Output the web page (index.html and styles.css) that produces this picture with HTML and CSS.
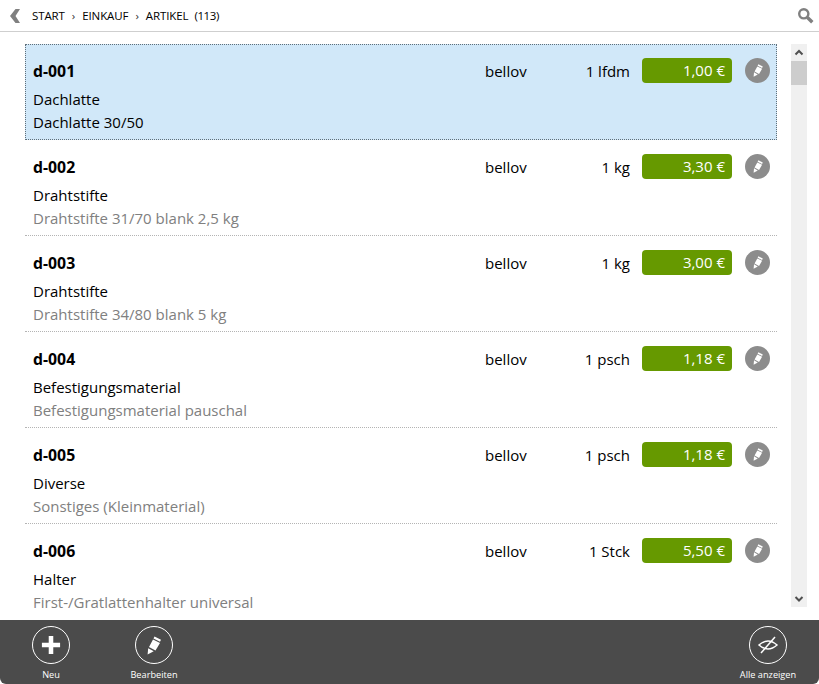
FILE: index.html
```html
<!doctype html>
<html>
    <head>
        <meta charset="utf-8">
        <title>Artikel</title>
        <link rel="stylesheet" href="styles.css">
    </head>
    <body>
    <svg class="defs" width="0" height="0">
        <symbol id="pen" viewBox="0 0 14 19">
            <path d="M7.5 0.5 L14 3.7 L13 5.7 L6.5 2.5 Z"/>
            <path d="M6 3.5 L13 7 L8.5 14.5 L2 11 Z"/>
            <path d="M1.2 12.2 L6.7 15.2 L0.6 18.6 Z"/>
        </symbol>
    </svg>

    <div class="app">
        <div class="topbar">
            <svg class="back" width="10" height="14" viewBox="0 0 10 14"><path d="M5.5 0 L10 0 L5.5 7 L10 14 L5.5 14 L0 7 Z"/></svg>
            <div class="crumbs">
                <span>START</span><span class="sep">›</span><span>EINKAUF</span><span class="sep">›</span><span>ARTIKEL</span><span class="count">(113)</span>
            </div>
            <svg class="search" width="17" height="17" viewBox="0 0 17 17"><circle cx="6.8" cy="6.8" r="4.6"/><path d="M10.5 10.5 L15.3 15.3"/></svg>
        </div>

        <div class="main">
            <div class="list">
                <div class="row selected">
                    <div class="row-top">
                        <div class="nr">d-001</div>
                        <div class="owner">bellov</div>
                        <div class="unit">1 lfdm</div>
                        <div class="price">1,00 €</div>
                        <div class="edit"><svg width="10" height="13"><use href="#pen"/></svg></div>
                    </div>
                    <div class="name">Dachlatte</div>
                    <div class="desc">Dachlatte 30/50</div>
                </div>
                <div class="row">
                    <div class="row-top">
                        <div class="nr">d-002</div>
                        <div class="owner">bellov</div>
                        <div class="unit">1 kg</div>
                        <div class="price">3,30 €</div>
                        <div class="edit"><svg width="10" height="13"><use href="#pen"/></svg></div>
                    </div>
                    <div class="name">Drahtstifte</div>
                    <div class="desc">Drahtstifte 31/70 blank 2,5 kg</div>
                </div>
                <div class="row">
                    <div class="row-top">
                        <div class="nr">d-003</div>
                        <div class="owner">bellov</div>
                        <div class="unit">1 kg</div>
                        <div class="price">3,00 €</div>
                        <div class="edit"><svg width="10" height="13"><use href="#pen"/></svg></div>
                    </div>
                    <div class="name">Drahtstifte</div>
                    <div class="desc">Drahtstifte 34/80 blank 5 kg</div>
                </div>
                <div class="row">
                    <div class="row-top">
                        <div class="nr">d-004</div>
                        <div class="owner">bellov</div>
                        <div class="unit">1 psch</div>
                        <div class="price">1,18 €</div>
                        <div class="edit"><svg width="10" height="13"><use href="#pen"/></svg></div>
                    </div>
                    <div class="name">Befestigungsmaterial</div>
                    <div class="desc">Befestigungsmaterial pauschal</div>
                </div>
                <div class="row">
                    <div class="row-top">
                        <div class="nr">d-005</div>
                        <div class="owner">bellov</div>
                        <div class="unit">1 psch</div>
                        <div class="price">1,18 €</div>
                        <div class="edit"><svg width="10" height="13"><use href="#pen"/></svg></div>
                    </div>
                    <div class="name">Diverse</div>
                    <div class="desc">Sonstiges (Kleinmaterial)</div>
                </div>
                <div class="row last">
                    <div class="row-top">
                        <div class="nr">d-006</div>
                        <div class="owner">bellov</div>
                        <div class="unit">1 Stck</div>
                        <div class="price">5,50 €</div>
                        <div class="edit"><svg width="10" height="13"><use href="#pen"/></svg></div>
                    </div>
                    <div class="name">Halter</div>
                    <div class="desc">First-/Gratlattenhalter universal</div>
                </div>
            </div>
            <div class="scrollbar">
                <svg width="16" height="17" viewBox="0 0 16 17"><path d="M4.5 10.5 L8 7 L11.5 10.5"/></svg>
                <div class="thumb"></div>
                <svg width="16" height="17" viewBox="0 0 16 17"><path d="M4.5 7 L8 10.5 L11.5 7"/></svg>
            </div>
        </div>

        <div class="footer">
            <div class="action action-new">
                <div class="ring"><svg width="20" height="20" viewBox="0 0 22 22"><path d="M8.5 1 H13.5 V8.5 H21 V13.5 H13.5 V21 H8.5 V13.5 H1 V8.5 H8.5 Z"/></svg></div>
                <div class="label">Neu</div>
            </div>
            <div class="action action-edit">
                <div class="ring"><svg width="14" height="19"><use href="#pen"/></svg></div>
                <div class="label">Bearbeiten</div>
            </div>
            <div class="action action-all">
                <div class="ring">
                    <svg class="eye" width="24" height="24" viewBox="0 0 24 24"><path d="M3 12 Q12 4 21 12 Q12 20 3 12 Z"/><path d="M5 20 L19 4"/></svg>
                </div>
                <div class="label">Alle anzeigen</div>
            </div>
        </div>
    </div>
    </body>
</html>
```

FILE: styles.css
```css
html, body {
    margin: 0;
    padding: 0;
    background: #fff;
}
body {
    font-family: "Open Sans", "Noto Sans", sans-serif;
    color: #000;
}
.defs {
    display: block;
    height: 0;
}
.app {
    width: 819px;
    height: 684px;
    display: flex;
    flex-direction: column;
    overflow: hidden;
}

.topbar {
    flex: none;
    box-sizing: border-box;
    height: 32px;
    display: flex;
    align-items: center;
    border-bottom: 1px solid #cfcfcf;
    padding-left: 10px;
    padding-right: 5px;
}
.back {
    fill: #808080;
    margin-right: 12px;
}
.crumbs {
    flex: 1;
    font-size: 11.5px;
    letter-spacing: -0.1px;
}
.sep {
    margin: 0 7px;
    color: #333;
}
.count {
    margin-left: 6px;
    letter-spacing: -0.4px;
}
.search {
    fill: none;
    stroke: #808080;
    stroke-width: 2.4;
}
.search path {
    stroke-width: 3.4;
}

.main {
    flex: 1;
    min-height: 0;
    display: flex;
    padding-top: 12px;
    padding-left: 25px;
    padding-right: 12px;
}
.list {
    width: 752px;
    overflow: hidden;
}
.row {
    border-bottom: 1px dotted #b4b4b4;
    padding-left: 8px;
    padding-right: 7px;
    box-sizing: border-box;
    height: 96px;
    font-size: 15px;
}
.row.last {
    border-bottom: none;
}
.row.selected {
    background: #d1e8f9;
    border: 1px dotted #5f6f7a;
    padding-left: 7px;
    padding-right: 6px;
}
.row-top {
    display: flex;
    align-items: center;
    height: 25px;
    padding-top: 14px;
}
.selected .row-top {
    padding-top: 13px;
}
.nr {
    width: 452px;
    font-weight: 700;
    font-size: 15.8px;
}
.owner {
    width: 80px;
}
.unit {
    width: 65px;
    text-align: right;
}
.price {
    width: 90px;
    height: 25px;
    line-height: 25px;
    margin-left: 12px;
    box-sizing: border-box;
    padding-right: 7px;
    text-align: right;
    color: #fff;
    background: #669900;
    border-radius: 4px;
}
.edit {
    width: 25px;
    height: 25px;
    margin-left: 13px;
    border-radius: 50%;
    background: #8c8c8c;
    display: flex;
    align-items: center;
    justify-content: center;
}
.edit svg {
    fill: #fff;
}
.name {
    margin-top: 5px;
    line-height: 23px;
}
.desc {
    line-height: 23px;
    color: #808080;
}
.selected .desc {
    color: #000;
}

.scrollbar {
    width: 16px;
    height: 563px;
    margin-left: 14px;
    background: #f0f0f0;
    display: flex;
    flex-direction: column;
    justify-content: space-between;
    position: relative;
}
.scrollbar svg {
    fill: none;
    stroke: #505050;
    stroke-width: 2;
}
.thumb {
    position: absolute;
    top: 17px;
    left: 0;
    width: 16px;
    height: 24px;
    background: #cdcdcd;
}

.footer {
    height: 64px;
    flex: none;
    display: flex;
    background: #4b4b4b;
    border-radius: 0 0 6px 6px;
    color: #fff;
}
.action {
    display: flex;
    flex-direction: column;
    align-items: center;
    padding-top: 6px;
}
.action-new {
    width: 66px;
    margin-left: 18px;
}
.action-edit {
    width: 80px;
    margin-left: 30px;
}
.action-all {
    width: 80px;
    margin-left: auto;
    margin-right: 11px;
}
.ring {
    width: 36px;
    height: 36px;
    border: 1px solid #fff;
    border-radius: 50%;
    display: flex;
    align-items: center;
    justify-content: center;
}
.ring svg {
    fill: #fff;
}
.ring .eye {
    fill: none;
    stroke: #fff;
    stroke-width: 1.5;
}
.label {
    margin-top: 4px;
    font-size: 9.2px;
    white-space: nowrap;
}
```
